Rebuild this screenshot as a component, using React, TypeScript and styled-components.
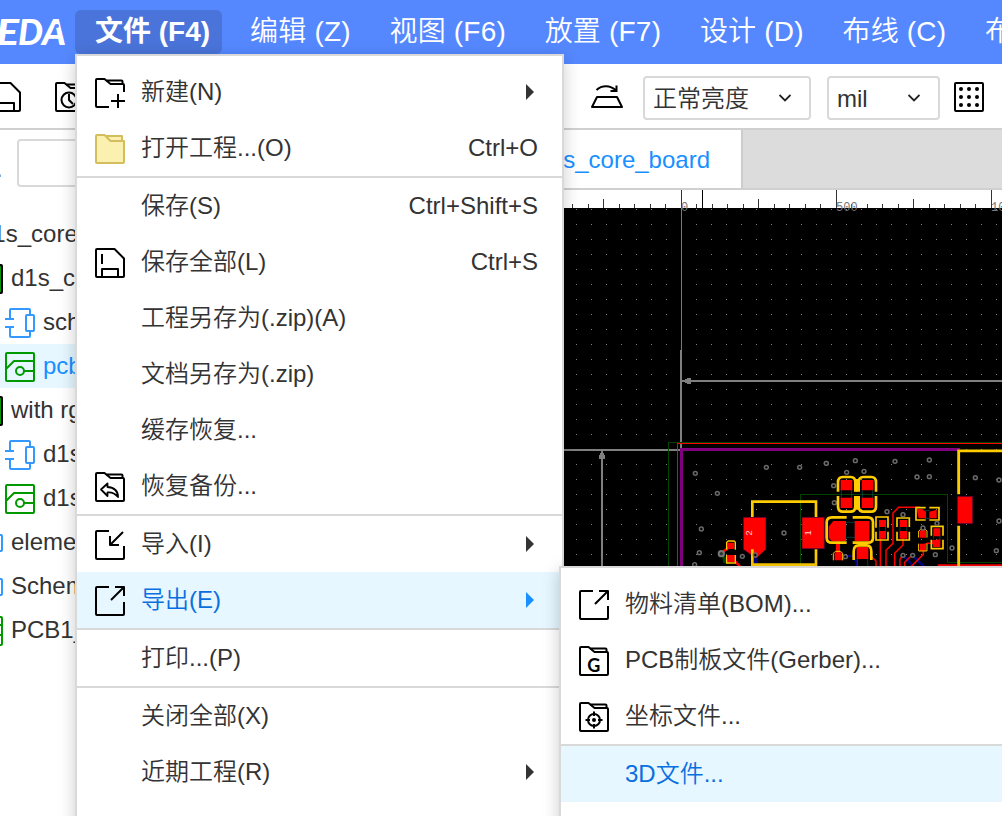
import React from "react";
import styled, { createGlobalStyle, css } from "styled-components";

const GlobalStyle = createGlobalStyle`
  * { box-sizing: border-box; }
  body {
    margin: 0;
    overflow: hidden;
    font-family: "Liberation Sans", "Noto Sans CJK SC", sans-serif;
    font-size: 24px;
    line-height: 28px;
    font-weight: 350;
    color: #333;
  }
  svg { display: block; flex: none; }
`;

const Page = styled.div`
  position: relative;
  display: flex;
  flex-direction: column;
  width: 1002px;
  height: 816px;
  overflow: hidden;
  background: #fff;
`;

const Header = styled.header`
  display: flex;
  height: 64px;
  padding-top: 10px;
  background: #5588ff;
  color: #fff;
  white-space: nowrap;
  overflow: hidden;
`;

const Logo = styled.div`
  flex: none;
  width: 75px;
  height: 44px;
`;

const NavItem = styled.div<{ $active?: boolean }>`
  flex: none;
  height: 44px;
  margin-right: -1.3px;
  padding: 0 20px;
  font-size: 28px;
  line-height: 44px;
  letter-spacing: 0.2px;
  ${(p) =>
    p.$active &&
    css`
      width: 147px;
      margin-right: 8px;
      padding-right: 0;
      border-radius: 6px;
      background: #4a74d9;
      font-weight: 700;
      letter-spacing: 0;
    `}
`;

const Toolbar = styled.div`
  display: flex;
  justify-content: space-between;
  height: 66px;
  padding: 0 18px 0 0;
  border-bottom: 2px solid #d0d0d0;
`;

const ToolGroup = styled.div<{ $gap: number; $shift?: number }>`
  display: flex;
  align-items: center;
  gap: ${(p) => p.$gap}px;
  margin-left: ${(p) => p.$shift || 0}px;
  padding-top: 1px;
`;

const Select = styled.div<{ $width: number }>`
  display: flex;
  align-items: center;
  justify-content: space-between;
  width: ${(p) => p.$width}px;
  height: 44px;
  margin-top: 2px;
  padding: 0 18px 0 8px;
  border: 2px solid #d9d9d9;
  border-radius: 4px;
`;

const SelectValue = styled.span`
  padding-top: 2px;
`;

const Body = styled.div`
  display: flex;
  flex: 1;
  min-height: 0;
`;

const Sidebar = styled.aside`
  flex: none;
  width: 540px;
  overflow: hidden;
`;

const SearchRow = styled.div`
  display: flex;
  height: 82px;
  padding-top: 9px;
  color: #666;
`;

const FilterLabel = styled.span`
  width: 17px;
  margin-left: -4px;
  margin-right: 4px;
  line-height: 60px;
`;

const SearchBox = styled.div`
  width: 480px;
  height: 48px;
  border: 2px solid #d9d9d9;
  border-radius: 4px;
`;

const Tree = styled.div`
  margin-left: -59px;
`;

const TreeRow = styled.div<{ $depth: number; $selected?: boolean }>`
  display: flex;
  align-items: center;
  gap: 8px;
  height: 44px;
  padding-left: ${(p) => p.$depth * 32}px;
  white-space: nowrap;
  background: ${(p) => (p.$selected ? "#e6f7ff" : "transparent")};
  color: ${(p) => (p.$selected ? "#1890ff" : "#333")};
`;

const TreeIcon = styled.span`
  width: 30px;
  height: 30px;
  margin-top: 2px;
`;

const Editor = styled.main`
  flex: 1;
  display: flex;
  flex-direction: column;
  min-width: 0;
`;

const Tabs = styled.div`
  display: flex;
  flex: none;
  height: 60px;
  border-bottom: 2px solid #d0d0d0;
  background: #dcdcdc;
`;

const Tab = styled.div`
  display: flex;
  align-items: center;
  justify-content: flex-end;
  width: 203px;
  padding: 2px 31px 0 0;
  border-right: 2px solid #ccc;
  background: #fff;
  color: #1890ff;
  white-space: nowrap;
`;

const MenuPanel = styled.div<{ $x: number; $y: number; $w: number }>`
  position: absolute;
  left: ${(p) => p.$x}px;
  top: ${(p) => p.$y}px;
  width: ${(p) => p.$w}px;
  height: 900px;
  padding-top: 8px;
  border: 2px solid #d9d9d9;
  background: #fff;
  box-shadow: 0 4px 16px rgba(0, 0, 0, 0.2);
`;

const MenuRow = styled.div<{ $active?: boolean; $divided?: boolean }>`
  display: flex;
  align-items: center;
  box-sizing: content-box;
  height: 56px;
  padding: 0 24px 0 18px;
  border-bottom: ${(p) => (p.$divided ? "2px solid #d9d9d9" : "0")};
  background: ${(p) => (p.$active ? "#e6f7ff" : "transparent")};
  color: ${(p) => (p.$active ? "#0a6fdf" : "#333")};
  white-space: nowrap;
`;

const MenuIcon = styled.span`
  flex: none;
  width: 30px;
  height: 30px;
  margin: 2px 16px 0 0;
  color: #000;
`;

const MenuLabel = styled.span`
  flex: 1;
`;

const Arrow = styled.span<{ $active?: boolean }>`
  margin-right: 4px;
  border-left: 8px solid ${(p) => (p.$active ? "#1890ff" : "#333")};
  border-top: 8px solid transparent;
  border-bottom: 8px solid transparent;
`;

type Kids = { children?: React.ReactNode; color?: string };

const Icon = ({ children, color = "currentColor" }: Kids) => (
  <svg width="30" height="30" viewBox="0 0 30 30" fill="none" stroke={color} strokeWidth="2" strokeLinejoin="round">
    {children}
  </svg>
);

const Folder = ({ children }: Kids) => (
  <Icon color="#000">
    <path d="M29 9V28a1 1 0 0 1-1 1H2a1 1 0 0 1-1-1V2a1 1 0 0 1 1-1H9.500L15.500 6H28a1 1 0 0 1 1 1V9" />
    <path d="M11.500 2.500H26.500a1 1 0 0 1 1 1V6" />
    {children}
  </Icon>
);

const NewIcon = () => (
  <Icon>
    <path d="M14 29H2a1 1 0 0 1-1-1V2a1 1 0 0 1 1-1H9.500L15.500 6H28a1 1 0 0 1 1 1V14M11.500 2.500H26.500a1 1 0 0 1 1 1V6M16 23H30M23 16V30" />
  </Icon>
);

const OpenIcon = () => (
  <Icon color="#d4bd5c">
    <path fill="#faf0af" d="M11 2H27V8H15z" />
    <path fill="#faf0af" d="M1 2a1 1 0 0 1 1-1H9.500L15.500 7H29V28a1 1 0 0 1-1 1H2a1 1 0 0 1-1-1z" />
  </Icon>
);

const SaveIcon = () => (
  <Icon color="#000">
    <path d="M2 1H19.500L29 10.500V28a1 1 0 0 1-1 1H2a1 1 0 0 1-1-1V2a1 1 0 0 1 1-1zM7 6V16M7 29V21H23V29" />
  </Icon>
);

const RecoverIcon = () => (
  <Folder>
    <path strokeWidth="1.800" d="M12.500 11.500L6 17.500L12.500 24V20.500C17 20 20 21.500 23 25C23 19 19 15.500 12.500 15z" />
  </Folder>
);

const ImportIcon = () => (
  <Icon>
    <path d="M14 1H2a1 1 0 0 0-1 1V28a1 1 0 0 0 1 1H28a1 1 0 0 0 1-1V16M28 2L15 15M15 6V15H24" />
  </Icon>
);

const ExportIcon = () => (
  <Icon>
    <path d="M14 1H2a1 1 0 0 0-1 1V28a1 1 0 0 0 1 1H28a1 1 0 0 0 1-1V16M16 14L29 1M20 1H29V10" />
  </Icon>
);

const GerberIcon = () => (
  <Folder>
    <text x="14.800" y="25.500" textAnchor="middle" fontFamily="Lato" fontWeight="700" fontSize="18" fill="#000" stroke="none">G</text>
  </Folder>
);

const CoordIcon = () => (
  <Folder>
    <circle cx="15" cy="18" r="6" />
    <circle cx="15" cy="18" r="2" fill="#000" stroke="none" />
    <path d="M15 9.500V14M15 22V26.500M6.500 18H11M19 18H23.500" />
  </Folder>
);

const HistoryIcon = () => (
  <Folder>
    <circle cx="14" cy="18" r="7.500" />
    <path d="M14 12V18L18 22" />
  </Folder>
);

const SchIcon = () => (
  <Icon color="#3399ff">
    <path d="M5 11V2a1 1 0 0 1 1-1H24a1 1 0 0 1 1 1V7M0 11H9M0 19H9M5 19V28a1 1 0 0 0 1 1H24a1 1 0 0 0 1-1V24" />
    <rect x="21" y="7" width="8" height="16" rx="1" />
  </Icon>
);

const PcbIcon = () => (
  <Icon color="#009900">
    <rect x="1" y="1" width="28" height="28" rx="1" />
    <path d="M1 17L9 9H29M19 19H29" />
    <circle cx="15" cy="19" r="4" />
  </Icon>
);

const BoardIcon = () => (
  <Icon color="#000">
    <rect x="1" y="1" width="28" height="28" rx="1" fill="#009900" />
  </Icon>
);

const FlipIcon = () => (
  <svg width="32" height="26" viewBox="0 0 32 26" fill="none" stroke="#000" strokeWidth="2">
    <path strokeLinejoin="round" d="M6 13H26L31 23H1z" />
    <path d="M5.500 6C11 1 19 1 25 6.500M25.500 1.500V7H19.500" />
  </svg>
);

const GridIcon = () => (
  <Icon color="#000">
    <rect x="1" y="1" width="28" height="28" rx="1" />
    {[7, 15, 23].map((y) => [7, 15, 23].map((x) => <circle key={`${x}-${y}`} cx={x} cy={y} r="2" fill="#000" stroke="none" />))}
  </Icon>
);

const Chevron = () => (
  <svg width="12" height="8" viewBox="0 0 12 8" fill="none" stroke="#222" strokeWidth="1.800">
    <path d="M0.500 1L6 6.500L11.500 1" />
  </svg>
);

const YELLOW = "#ffcc00";
const RED = "#ff0000";

const viasLeft = [[106, 115], [172, 175], [319, 97], [419, 97], [499, 85], [124, 282], [118, 353], [247, 364], [372, 294], [286, 360], [521, 152], [523, 203], [104, 389]];
const viasRight = [[19, 85], [106, 77], [225, 79], [328, 75], [291, 126], [328, 125], [466, 128], [537, 135], [80, 112], [132, 109], [201, 230], [249, 239], [309, 279], [351, 265], [396, 339], [346, 359], [529, 347], [537, 258], [76, 365], [249, 361], [278, 361]];

const Vias = ({ points }: { points: number[][] }) => (
  <g fill="#000" stroke="#6a6a6a" strokeWidth="4.500">
    {points.map(([x, y]) => <circle key={`${x}-${y}`} cx={x} cy={y} r="5.800" />)}
  </g>
);

/* Ruler, grid and the board drawing; user units are page pixels offset by the editor origin. */
const PcbCanvas = () => {
  const ticks = Array.from({ length: 30 }, (_, i) => i - 8);
  return (
    <svg width="462" height="626" viewBox="540 190 462 626" shapeRendering="crispEdges">
      <defs>
        <pattern id="dots" x="576" y="209" width="15" height="15" patternUnits="userSpaceOnUse">
          <rect width="1" height="1" fill="#808080" />
        </pattern>
      </defs>
      <rect x="540" y="208" width="462" height="608" fill="#000" />
      {ticks.map((i) => {
        const h = i % 10 === 0 ? 18 : i % 5 === 0 ? 9 : 4;
        return <rect key={i} x={Math.round(680.800 + i * 15.500)} y={208 - h} width="1" height={h} fill="#333" />;
      })}
      <rect x="702" y="190" width="1" height="18" fill="#000" />
      <g fontFamily="Liberation Mono" fontSize="12" fill="#777">
        <text x="681" y="211">0</text>
        <text x="836" y="211">500</text>
        <text x="991" y="211">1000</text>
      </g>
      <rect x="540" y="208" width="462" height="608" fill="url(#dots)" />
      <g fill="#808080">
        <rect x="681" y="208" width="1" height="142" fill="#777" />
        <rect x="680" y="350" width="2" height="99" />
        <rect x="682" y="380" width="320" height="2" />
        <path d="M682 381L688 378H691V384H688z" />
        <rect x="540" y="449" width="140" height="2" />
        <rect x="601" y="451" width="2" height="200" />
        <path d="M602 450L605 456V459H599V456z" />
      </g>
      <g fill="none">
        <path stroke="#004400" d="M668.500 816V442.500H1002M800.500 816V494.500H947.500V562.500H1002" />
        <path stroke={RED} d="M677.500 816V443.500H1002" />
        <path stroke="#800080" strokeWidth="3" d="M681.500 816V449.500H960" />
      </g>

      <g transform="translate(660 435) scale(0.33333)" shapeRendering="auto">
        <path fill="#000080" d="M282 360H294V390H282z" />
        <path fill="#004400" d="M185 355L215 385H190z" />
        <path fill={RED} stroke="#400040" strokeWidth="2" d="M250 247H318V343L288 370L250 343zM426 247H493V341H426z" />
        <path fill={RED} d="M203 323H223V342H203zM203 360H225V381H203z" />
        <path stroke={RED} strokeWidth="8" d="M205 338L185 354M222 376L240 394" />
        <path fill="none" stroke={YELLOW} strokeWidth="8" d="M277 246V200H468V246M277 343V389H468V343" />
        <path fill="none" stroke={YELLOW} strokeWidth="4" d="M200 344V322L205 318H222L226 322V344M200 360V384H226V360" />
        <Vias points={viasLeft} />
        <circle cx="184" cy="356" r="8" fill="#333" stroke="#777" strokeWidth="6" />
        <g fill="#ffd0d0" fontFamily="Liberation Sans" fontSize="28" textAnchor="middle">
          <text transform="translate(276 294) rotate(-90)">2</text>
          <text transform="translate(453 294) rotate(-90)">1</text>
        </g>
      </g>

      <g transform="translate(820 435) scale(0.33333)" fill="none" shapeRendering="auto">
        <path stroke="#000088" strokeWidth="8" d="M84 363H98L110 380V399M252 365L284 397M282 366L314 397" />
        <path stroke="#005a5a" strokeWidth="2" d="M64 165V189M95 165V189M127 165V189M158 165V189M78 262H106M78 307H106M112 370V399M143 370V399M178 275V289M196 275V289M240 275V289M260 275V289M315 227H330M315 250H330M341 303V314M360 303V314" />
        <g fill={RED}>
          <path d="M62 135H97V166H62zM62 188H97V219H62zM125 135H160V166H125zM125 188H160V219H125z" />
          <path d="M40 258H78V318H35L26 308V275zM104 258H148V318H104z" />
          <path d="M110 335H145V372H110zM44 355L54 345L68 358V376H44z" />
          <path d="M177 255H198V276H177zM177 288H198V311H177zM239 255H261V276H239zM239 288H261V311H239z" />
          <path d="M290 222H306L318 230V250H296zM328 230L350 224V250H328z" />
          <path d="M340 280H361V304H340zM336 316L361 313V336H340zM300 288L309 280L318 288V308H300zM300 326H318V348H300z" />
          <path d="M412 184H458V266H412z" stroke="#400040" strokeWidth="2" />
        </g>
        <g stroke={RED} strokeWidth="4.500">
          <path d="M300 217H236L219 234V325L198 346V399M181 310V399M249 310V330L224 355V399M310 345V358L272 396M312 330L322 325H340" />
          <path d="M240 399V372L249 361M254 399V382L274 362M152 362L168 378V399" />
          <path strokeWidth="12" d="M54 320V350" />
          <path strokeWidth="6" d="M353 391H546" />
        </g>
        <g stroke={YELLOW} strokeWidth="8">
          <path d="M54 170V142Q54 126 68 126H92Q106 126 106 142V170M54 183V214Q54 230 68 230H92Q106 230 106 214V183" />
          <path d="M116 170V142Q116 126 130 126H154Q168 126 168 142V170M116 183V214Q116 230 130 230H154Q168 230 168 214V183" />
          <path d="M111 132V170M111 183V224" strokeWidth="7" />
          <path d="M80 247H36Q20 247 20 262V308Q20 323 36 323H80M98 247H143Q159 247 159 262V308Q159 323 143 323H98" />
          <path d="M101 375V350Q101 331 116 331H140Q154 331 154 350V375" />
          <path d="M416 178V47.500H546M416 272V399" strokeWidth="8.500" />
        </g>
        <g stroke={YELLOW} strokeWidth="5">
          <path d="M168 278V246H204V278M168 290V315H204V290M231 276V249H268V276M231 290V315H268V290" />
          <path d="M317 218H288V255H317M328 218H357V255H328M334 302V274H369V302M334 314V341H369V314" />
          <path strokeWidth="3" d="M40 376V355L46 349H62L68 355V376M296 308V288L302 283H316L321 288V308M296 326V348H321V326" />
        </g>
        <Vias points={viasRight} />
      </g>
    </svg>
  );
};

const nav = ["编辑 (Z)", "视图 (F6)", "放置 (F7)", "设计 (D)", "布线 (C)", "布局 (O)"];

const tree: { depth: number; label: string; icon?: React.ReactNode; selected?: boolean }[] = [
  { depth: 0, label: "d1s_core_board" },
  { depth: 1, label: "d1s_core_board", icon: <BoardIcon /> },
  { depth: 2, label: "sch_d1s", icon: <SchIcon /> },
  { depth: 2, label: "pcb_d1s", icon: <PcbIcon />, selected: true },
  { depth: 1, label: "with rgb", icon: <BoardIcon /> },
  { depth: 2, label: "d1s_sch", icon: <SchIcon /> },
  { depth: 2, label: "d1s_pcb", icon: <PcbIcon /> },
  { depth: 1, label: "element", icon: <SchIcon /> },
  { depth: 1, label: "Schematic1", icon: <SchIcon /> },
  { depth: 1, label: "PCB1_1", icon: <PcbIcon /> },
];

type Entry = { label: string; icon?: React.ReactNode; keys?: string; sub?: boolean; active?: boolean; divided?: boolean };

const fileMenu: Entry[] = [
  { label: "新建(N)", icon: <NewIcon />, sub: true },
  { label: "打开工程...(O)", icon: <OpenIcon />, keys: "Ctrl+O", divided: true },
  { label: "保存(S)", keys: "Ctrl+Shift+S" },
  { label: "保存全部(L)", icon: <SaveIcon />, keys: "Ctrl+S" },
  { label: "工程另存为(.zip)(A)" },
  { label: "文档另存为(.zip)" },
  { label: "缓存恢复..." },
  { label: "恢复备份...", icon: <RecoverIcon />, divided: true },
  { label: "导入(I)", icon: <ImportIcon />, sub: true },
  { label: "导出(E)", icon: <ExportIcon />, sub: true, active: true, divided: true },
  { label: "打印...(P)", divided: true },
  { label: "关闭全部(X)" },
  { label: "近期工程(R)", sub: true },
];

const exportMenu: Entry[] = [
  { label: "物料清单(BOM)...", icon: <ExportIcon /> },
  { label: "PCB制板文件(Gerber)...", icon: <GerberIcon /> },
  { label: "坐标文件...", icon: <CoordIcon />, divided: true },
  { label: "3D文件...", active: true },
];

const Menu = ({ x, y, width, entries }: { x: number; y: number; width: number; entries: Entry[] }) => (
  <MenuPanel $x={x} $y={y} $w={width}>
    {entries.map((e) => (
      <MenuRow key={e.label} $active={e.active} $divided={e.divided}>
        <MenuIcon>{e.icon}</MenuIcon>
        <MenuLabel>{e.label}</MenuLabel>
        {e.keys}
        {e.sub && <Arrow $active={e.active} />}
      </MenuRow>
    ))}
  </MenuPanel>
);

export default function App() {
  return (
    <Page>
      <GlobalStyle />
      <Header>
        <Logo>
          <svg width="75" height="44" viewBox="0 10 75 44" fill="#fff" fontFamily="Lato" fontWeight="900" fontStyle="italic" fontSize="36">
            <text x="-4" y="45" textLength="23" lengthAdjust="spacingAndGlyphs">E</text>
            <text x="18" y="45" textLength="25" lengthAdjust="spacingAndGlyphs">D</text>
            <text x="42" y="45" textLength="24" lengthAdjust="spacingAndGlyphs">A</text>
            <circle cx="57" cy="26" r="2" fill="#5588ff" />
          </svg>
        </Logo>
        <NavItem $active>文件 (F4)</NavItem>
        {nav.map((n) => <NavItem key={n}>{n}</NavItem>)}
      </Header>
      <Toolbar>
        <ToolGroup $gap={34} $shift={-9}>
          <SaveIcon />
          <HistoryIcon />
        </ToolGroup>
        <ToolGroup $gap={0}>
          <FlipIcon />
          <ToolGroup $gap={16} $shift={20}>
            <Select $width={168}><SelectValue>正常亮度</SelectValue><Chevron /></Select>
            <Select $width={113}><SelectValue>mil</SelectValue><Chevron /></Select>
          </ToolGroup>
          <ToolGroup $gap={0} $shift={14}><GridIcon /></ToolGroup>
        </ToolGroup>
      </Toolbar>
      <Body>
        <Sidebar>
          <SearchRow>
            <FilterLabel>.</FilterLabel>
            <SearchBox />
          </SearchRow>
          <Tree>
            {tree.map((t, i) => (
              <TreeRow key={i} $depth={t.depth} $selected={t.selected}>
                <TreeIcon>{t.icon}</TreeIcon>
                {t.label}
              </TreeRow>
            ))}
          </Tree>
        </Sidebar>
        <Editor>
          <Tabs><Tab>d1s_core_board</Tab></Tabs>
          <PcbCanvas />
        </Editor>
      </Body>
      <Menu x={75} y={54} width={489} entries={fileMenu} />
      <Menu x={559} y={566} width={489} entries={exportMenu} />
    </Page>
  );
}
